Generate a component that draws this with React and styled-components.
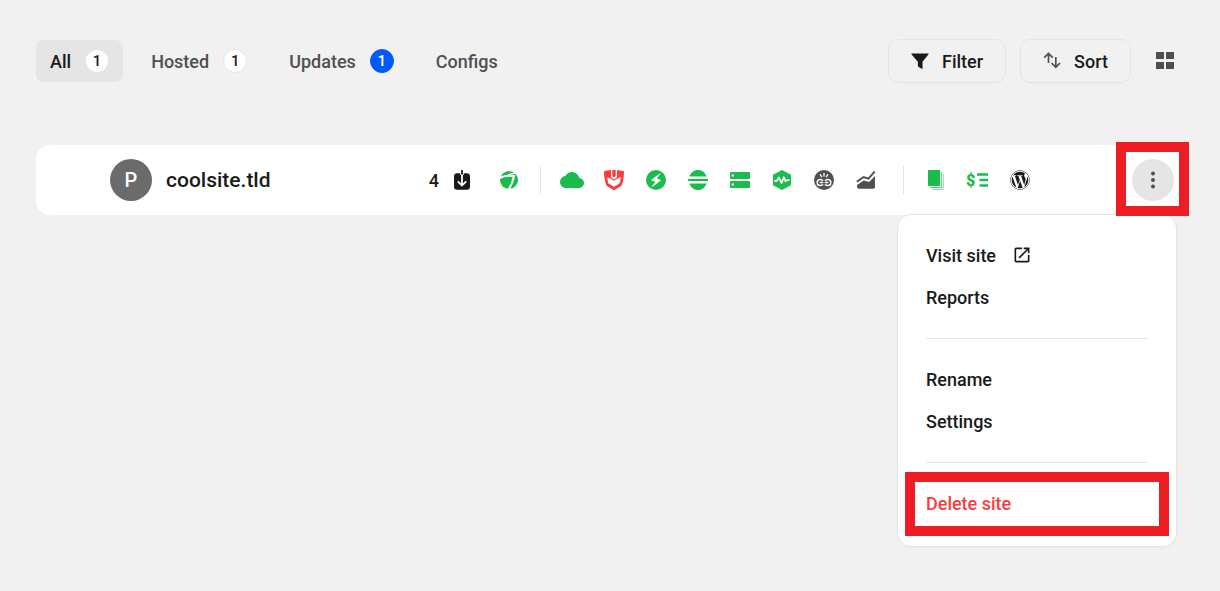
import React from "react";
import styled, { createGlobalStyle } from "styled-components";
import { MdCloud, MdOpenInNew } from "react-icons/md";
import { FaWordpress } from "react-icons/fa";

const GREEN = "#1abc4b";
const GREY = "#505050";
const RED = "#fb3c3c";

const tabs = [
  { name: "All", count: 1, active: true },
  { name: "Hosted", count: 1, tone: "outlined" },
  { name: "Updates", count: 1, tone: "blue" },
  { name: "Configs" },
];

/* Icons */

const FilterIcon = () => (
  <svg width="18" height="18" viewBox="0 0 18 18" aria-hidden="true">
    <path d="M1 1.5h16c.6 0 .8.6.4 1.100L11.500 9.800v6.500c0 .5-.4.700-.8.500l-3.300-2c-.3-.2-.5-.5-.5-.9V9.800L.6 2.600C.2 2.100.4 1.500 1 1.500z" fill="#1a1a1a" />
  </svg>
);

const SortIcon = () => (
  <svg width="18" height="18" viewBox="0 0 18 18" fill="none" stroke={GREY} strokeWidth="1.7" aria-hidden="true">
    <path d="M5.5 11V1.500M1.200 5.700l4.300-4.200 4.300 4.200M12.800 5v10.200M8.500 11l4.300 4.200 4.300-4.200" />
  </svg>
);

const GridIcon = () => (
  <svg width="18" height="18" viewBox="0 0 18 18" fill={GREY} aria-hidden="true">
    <path d="M0 0h8v7H0zM10 0h8v7h-8zM0 10h8v7H0zM10 10h8v7h-8z" />
  </svg>
);

const DownloadIcon = () => (
  <svg width="18" height="20" viewBox="0 0 18 20" aria-hidden="true">
    <rect x="1" y="3.3" width="16" height="16.4" rx="3" fill="#1a1a1a" />
    <path d="M9 2v3" stroke="#fff" strokeWidth="3.4" />
    <path d="M9 0v4.5" stroke="#1a1a1a" strokeWidth="1.8" />
    <path d="M9 5v10M4.8 11.3L9 15.4l4.2-4.1" fill="none" stroke="#fff" strokeWidth="1.8" />
  </svg>
);

const SwirlIcon = () => (
  <svg width="18" height="18" viewBox="0 0 18 18" aria-hidden="true">
    <circle cx="9" cy="9" r="9" fill={GREEN} />
    <path d="M-.5 7.200C3.500 4.600 8 4.200 14 5c-.8 4.500-2.200 9-5.500 13.500" fill="none" stroke="#fff" strokeWidth="2" />
    <path d="M7.500 4.500C10.500 2.400 13 1.900 16.500 2.600" fill="none" stroke="#fff" strokeWidth="1.2" />
  </svg>
);

const ShieldIcon = () => (
  <svg width="20" height="20" viewBox="0 0 20 20" fill={RED} aria-hidden="true">
    <path d="M.8 1L7 0v7.6l3 1.7 3-1.7V0l6.2 1c.6.1.8.5.8 1-.2 4.600-.7 8.500-2 12.500-.3.900-.8 1.600-1.600 2.100L11 19.700c-.7.400-1.300.400-2 0l-5.400-3.100C2.800 16.100 2.300 15.400 2 14.500.7 10.500.2 6.600 0 2c0-.5.2-.9.8-1z" />
    <path d="M3.300 7L10 10.600 16.700 7c-.1 2.300-.4 4.400-1.100 6.600L10 16.800l-5.600-3.200C3.700 11.400 3.400 9.300 3.300 7z" fill="#fff" />
    <path d="M8.300.1h3.400v6.200L10 7.300 8.300 6.300z" />
  </svg>
);

const BoltIcon = () => (
  <svg width="20" height="20" viewBox="0 0 20 20" aria-hidden="true">
    <circle cx="10" cy="10" r="10" fill={GREEN} />
    <path d="M15.200 2.500L5.600 9.600c-.4.300-.3.800.1 1l3.600 1.200-4.400 6.200 9.600-7.300c.4-.3.300-.8-.1-1l-3.500-1.200z" fill="#fff" />
  </svg>
);

const BandsIcon = () => (
  <svg width="20" height="20" viewBox="0 0 20 20" fill={GREEN} aria-hidden="true">
    <path d="M1.300 6.500C2.700 2.700 6 0 10 0s7.300 2.700 8.700 6.500zM0 9h20v2H0zM1.300 13.500C2.700 17.300 6 20 10 20s7.300-2.700 8.700-6.500z" />
  </svg>
);

const ServerIcon = () => (
  <svg width="20" height="20" viewBox="0 0 20 20" fill={GREEN} aria-hidden="true">
    <rect y="2" width="20" height="7" rx="1" />
    <rect y="11" width="20" height="7" rx="1" />
    <circle cx="2.8" cy="5.5" r="1.2" fill="#fff" />
    <circle cx="2.8" cy="14.5" r="1.2" fill="#fff" />
  </svg>
);

const PulseIcon = () => (
  <svg width="18" height="20" viewBox="0 0 18 20" aria-hidden="true">
    <path d="M9 0l9 4.800v10.400L9 20l-9-4.800V4.800z" fill={GREEN} />
    <path d="M1.500 10.800h2.400l2-3.400 2.600 5.800 2.300-6 1.800 4.200 1.300-1.200h2.600" fill="none" stroke="#fff" strokeWidth="1.7" strokeLinejoin="round" />
  </svg>
);

const BrokenLinkIcon = () => (
  <svg width="20" height="20" viewBox="0 0 20 20" aria-hidden="true">
    <circle cx="10" cy="10" r="10" fill={GREY} />
    <g fill="none" stroke="#fff" strokeWidth="1.5" strokeLinecap="round">
      <path d="M8.500 10.200C7.800 9.600 7 9.400 6.300 9.400a3.100 3.100 0 0 0 0 6.200c.9 0 1.700-.3 2.300-.9M11.500 10.200c.7-.6 1.500-.8 2.200-.8a3.100 3.100 0 0 1 0 6.200c-.9 0-1.700-.3-2.300-.9M6.300 12.500h2.500M11.200 12.500h2.500" />
      <path d="M10 3.500v2.800M6.300 4.700l1.200 2M13.700 4.700l-1.200 2" strokeWidth="1.3" />
    </g>
  </svg>
);

const ChartIcon = () => (
  <svg width="20" height="18" viewBox="0 0 20 18" aria-hidden="true">
    <path d="M.8 10.800l6.800-4.800 4.800 1.600 6.300-7" fill="none" stroke={GREY} strokeWidth="2" />
    <path d="M1 14l6.800-4.600 5.200 1.700L19 5v10.800c0 1.200-.8 2-2 2H3c-1.200 0-2-.8-2-2z" fill={GREY} />
  </svg>
);

const PagesIcon = () => (
  <svg width="18" height="20" viewBox="0 0 18 20" fill="none" stroke={GREEN} aria-hidden="true">
    <rect x="1" width="12" height="16" rx=".5" fill={GREEN} stroke="none" />
    <path d="M14.300 2v15.500H3" opacity=".75" />
    <path d="M16.200 4v15.400H5" opacity=".55" />
  </svg>
);

const BillingIcon = () => (
  <svg width="24" height="20" viewBox="0 0 24 20" aria-hidden="true">
    <text x="0" y="16" fill={GREEN} fontFamily="Roboto, sans-serif" fontSize="16" fontWeight="900">$</text>
    <path d="M11 4.500h11M13.500 10H22M13.500 15.500H22" stroke={GREEN} strokeWidth="2.3" />
  </svg>
);

const DotsIcon = () => (
  <svg width="4" height="18" viewBox="0 0 4 18" fill={GREY} aria-hidden="true">
    <circle cx="2" cy="2.5" r="2" />
    <circle cx="2" cy="9" r="2" />
    <circle cx="2" cy="15.5" r="2" />
  </svg>
);

const services = [
  { label: "Backups", icon: <MdCloud size={24} /> },
  { label: "Security", icon: <ShieldIcon /> },
  { label: "Performance", icon: <BoltIcon /> },
  { label: "Images", icon: <BandsIcon /> },
  { label: "Hosting", icon: <ServerIcon /> },
  { label: "Uptime", icon: <PulseIcon /> },
  { label: "Broken links", icon: <BrokenLinkIcon /> },
  { label: "Analytics", icon: <ChartIcon /> },
];

const extras = [
  { label: "Reports", icon: <PagesIcon /> },
  { label: "Billing", icon: <BillingIcon /> },
  { label: "WordPress admin", icon: <FaWordpress size={20} color="#1a1a1a" /> },
];

const App = () => {
  return (
    <>
      <GlobalStyle />
      <Page>
        <Toolbar>
          <Tabs>
            {tabs.map((tab) => (
              <Tab key={tab.name} $active={tab.active}>
                {tab.name}
                {tab.count && <Badge $tone={tab.tone}>{tab.count}</Badge>}
              </Tab>
            ))}
          </Tabs>
          <Actions>
            <ActionButton>
              <FilterIcon />
              Filter
            </ActionButton>
            <ActionButton>
              <SortIcon />
              Sort
            </ActionButton>
            <ViewButton aria-label="Grid view">
              <GridIcon />
            </ViewButton>
          </Actions>
        </Toolbar>

        <SiteRow>
          <Avatar>P</Avatar>
          <SiteName>coolsite.tld</SiteName>
          <Services>
            <UpdateLink href="#updates">
              4
              <DownloadIcon />
            </UpdateLink>
            <ServiceLink href="#hub" aria-label="Hub">
              <SwirlIcon />
            </ServiceLink>
            <Separator />
            {services.map((item) => (
              <ServiceLink key={item.label} href="#service" aria-label={item.label}>
                {item.icon}
              </ServiceLink>
            ))}
            <Separator $wide />
            {extras.map((item) => (
              <ServiceLink key={item.label} href="#service" aria-label={item.label}>
                {item.icon}
              </ServiceLink>
            ))}
          </Services>
          <Kebab>
            <KebabButton aria-label="Site options" aria-expanded="true">
              <DotsIcon />
            </KebabButton>
          </Kebab>

          <Menu>
            <MenuLink href="#visit">
              Visit site
              <MdOpenInNew size={20} />
            </MenuLink>
            <MenuLink href="#reports">Reports</MenuLink>
            <MenuRule />
            <MenuButton>Rename</MenuButton>
            <MenuLink href="#settings">Settings</MenuLink>
            <MenuRule />
            <Danger>
              <MenuButton $danger>Delete site</MenuButton>
            </Danger>
          </Menu>
        </SiteRow>
      </Page>
    </>
  );
};

const GlobalStyle = createGlobalStyle`
  * {
    box-sizing: border-box;
  }
  body {
    margin: 0;
    background: #f1f1f1;
    color: #1a1a1a;
    font-family: Roboto, "Liberation Sans", sans-serif;
    font-size: 18px;
    font-weight: 500;
  }
  button {
    margin: 0;
    border: 0;
    background: none;
    color: inherit;
    font: inherit;
    cursor: pointer;
  }
  a {
    color: inherit;
    text-decoration: none;
  }
  svg {
    flex: none;
  }
`;

const Page = styled.main`
  min-height: 100vh;
  padding: 39px 36px;
`;

const Toolbar = styled.div`
  display: flex;
  align-items: center;
  justify-content: space-between;
  margin-bottom: 62px;
`;

const Tabs = styled.nav`
  display: flex;
  gap: 14px;
`;

const Tab = styled.button`
  display: flex;
  align-items: center;
  gap: 14px;
  height: 42px;
  padding: 0 14px;
  border-radius: 8px;
  color: ${({ $active }) => ($active ? "#1a1a1a" : "#505050")};
  background: ${({ $active }) => ($active ? "#e5e5e5" : "transparent")};
`;

const Badge = styled.span`
  display: flex;
  align-items: center;
  justify-content: center;
  width: 24px;
  height: 24px;
  border: 1px solid ${({ $tone }) => ($tone === "blue" ? "#0059ff" : "#e5e5e5")};
  border-radius: 50%;
  background: ${({ $tone }) => ($tone === "blue" ? "#0059ff" : "#fff")};
  color: ${({ $tone }) => ($tone === "blue" ? "#fff" : "#1a1a1a")};
  font-size: 15px;
`;

const Actions = styled.div`
  display: flex;
  align-items: center;
  gap: 14px;
`;

const ActionButton = styled.button`
  display: flex;
  align-items: center;
  gap: 13px;
  height: 44px;
  padding: 0 22px;
  border: 1px solid #e5e5e5;
  border-radius: 10px;
`;

const ViewButton = styled.button`
  display: flex;
  align-items: center;
  justify-content: center;
  width: 39px;
  height: 42px;
  padding: 0;
`;

const SiteRow = styled.section`
  position: relative;
  display: flex;
  align-items: center;
  height: 70px;
  padding: 0 10px 0 74px;
  border-radius: 14px;
  background: #fff;
`;

const Avatar = styled.span`
  display: flex;
  align-items: center;
  justify-content: center;
  width: 42px;
  height: 42px;
  margin-right: 14px;
  border-radius: 50%;
  background: #6b6b6b;
  color: #fff;
  font-size: 20px;
`;

const SiteName = styled.h2`
  flex: 1;
  margin: 0;
  font-size: 21px;
  font-weight: 500;
`;

const Services = styled.div`
  display: flex;
  align-items: center;
  margin-right: 91px;
  color: ${GREEN};
`;

const UpdateLink = styled.a`
  display: flex;
  align-items: center;
  gap: 14px;
  margin-right: 17px;
  color: #1a1a1a;
`;

const ServiceLink = styled.a`
  display: flex;
  align-items: center;
  justify-content: center;
  width: 42px;
  height: 42px;
`;

const Separator = styled.span`
  width: 1px;
  height: 28px;
  margin: ${({ $wide }) => ($wide ? "0 11px 0 16px" : "0 10px")};
  background: #e5e5e5;
`;

const Kebab = styled.div`
  position: relative;

  /* marks the button for the reader */
  &::after {
    content: "";
    position: absolute;
    z-index: 2;
    inset: -17px -15px -15px -16px;
    border: 10px solid #ee1c25;
    pointer-events: none;
  }
`;

const KebabButton = styled.button`
  display: flex;
  align-items: center;
  justify-content: center;
  width: 42px;
  height: 42px;
  padding: 0;
  border-radius: 50%;
  background: #e5e5e5;
`;

const Menu = styled.div`
  position: absolute;
  z-index: 1;
  top: 69px;
  right: 7px;
  width: 280px;
  padding: 19px 28px 22px;
  border: 1px solid #e5e5e5;
  border-radius: 14px;
  background: #fff;
  box-shadow: 0 1px 3px rgba(0, 0, 0, 0.03);
`;

const MenuLink = styled.a`
  display: flex;
  align-items: center;
  gap: 16px;
  width: 100%;
  height: 42px;
`;

const MenuButton = styled.button`
  display: block;
  width: 100%;
  height: 42px;
  padding: 0;
  text-align: left;
  color: ${({ $danger }) => ($danger ? RED : "#1a1a1a")};
`;

const MenuRule = styled.hr`
  height: 1px;
  margin: 20px 0 19px;
  border: 0;
  background: #e5e5e5;
`;

const Danger = styled.div`
  position: relative;

  &::after {
    content: "";
    position: absolute;
    inset: -10px -21px -12px;
    border: 10px solid #ee1c25;
    pointer-events: none;
  }
`;

export default App;
